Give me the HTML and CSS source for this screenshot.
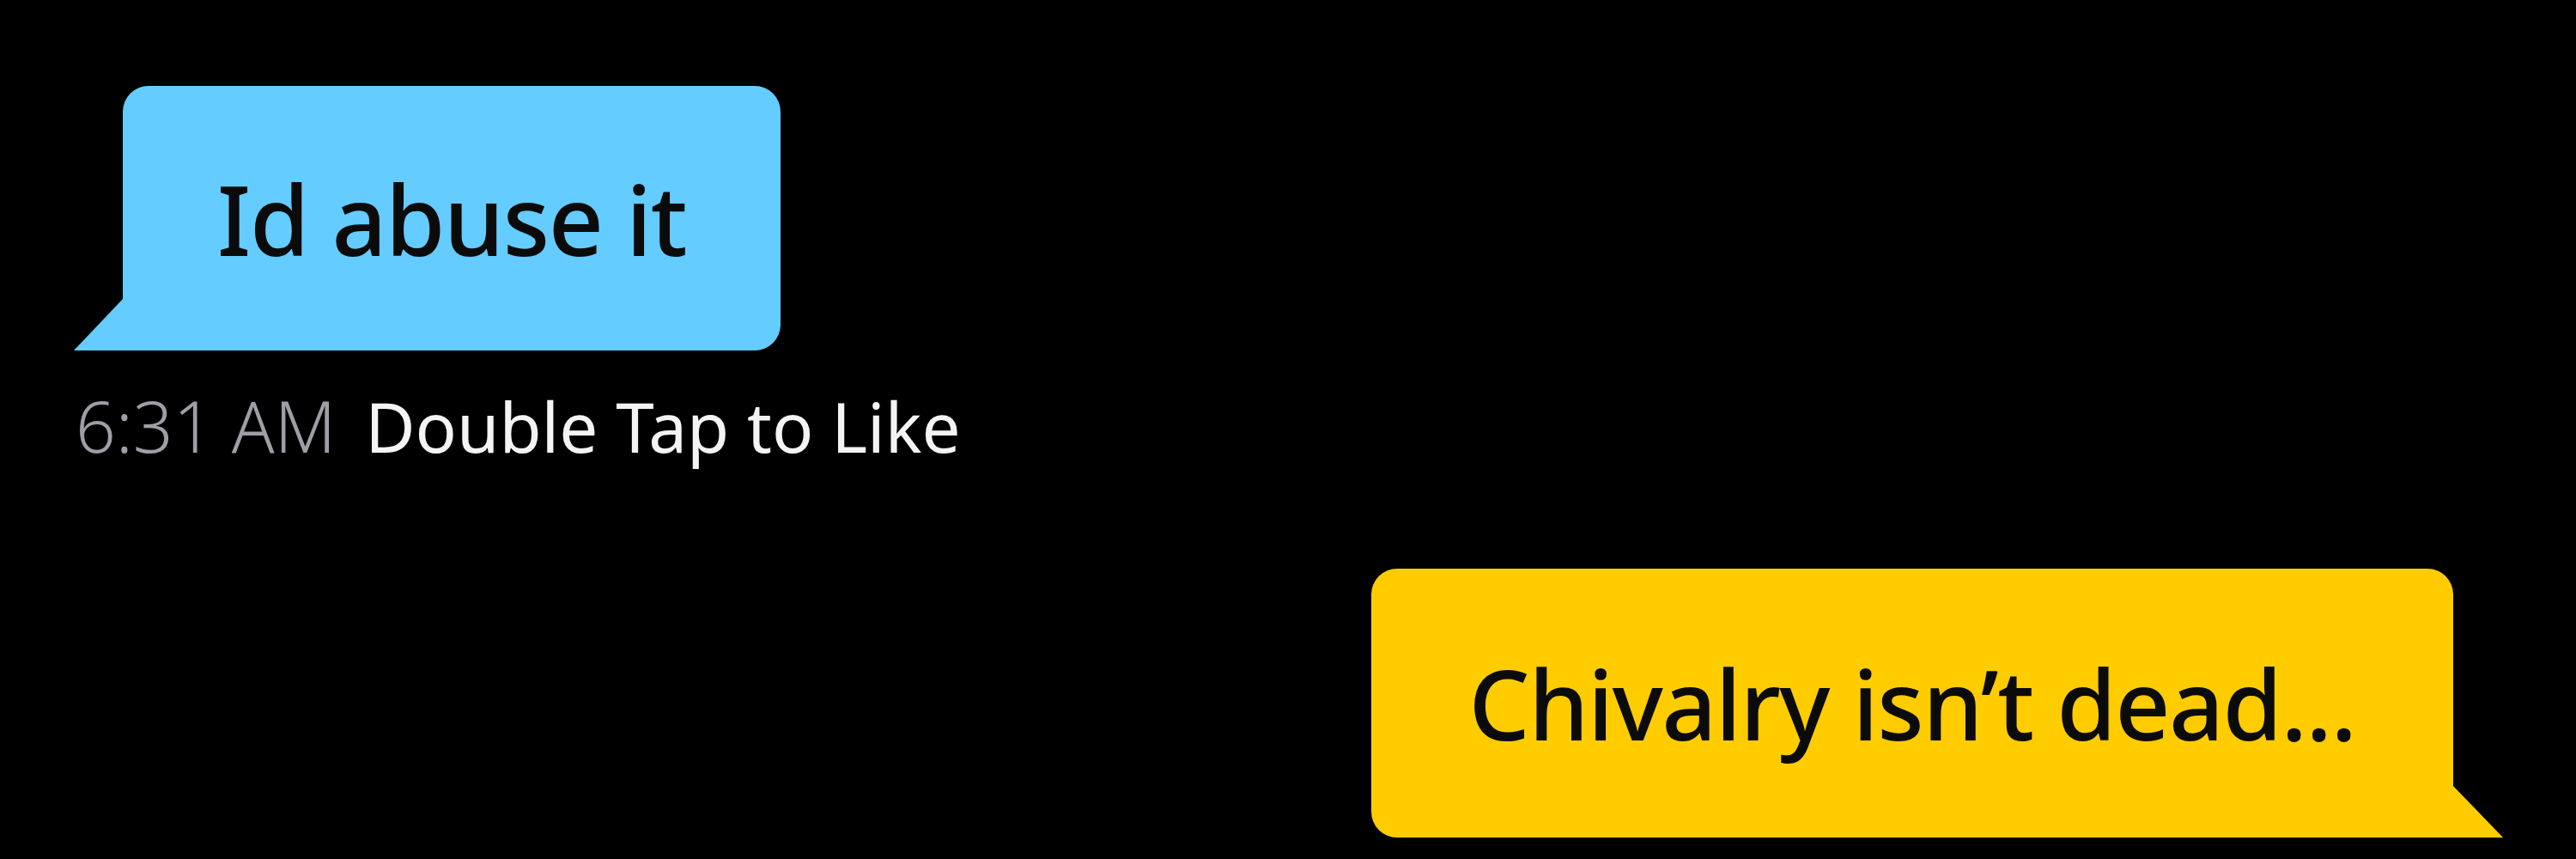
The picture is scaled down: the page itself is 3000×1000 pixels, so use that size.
FILE: index.html
```html
<!DOCTYPE html>
<html lang="en">
<head>
  <meta charset="UTF-8" />
  <title>Chat</title>
  <link rel="stylesheet" href="styles.css">
</head>
<body>

  <div class="thread">

    <!-- 受信メッセージ -->
    <div class="msg msg_in">
      <div class="tail"></div>
      <div class="bubble">Id abuse it</div>
    </div>

    <p class="meta">
      <span class="time">6:31 AM</span>
      <span class="like">Double Tap to Like</span>
    </p>

    <!-- 送信メッセージ -->
    <div class="msg msg_out">
      <div class="bubble">Chivalry isn’t dead...</div>
      <div class="tail"></div>
    </div>

  </div>

</body>
</html>
```

FILE: styles.css
```css
body {
  margin: 0;
  padding: 0;
  background: #000;
}

.thread {
  width: 3000px;
  height: 1000px;
  box-sizing: border-box;
  padding: 100px 85px 0 86px;

  display: flex;
  flex-direction: column;

  font-family: "Noto Sans", "Open Sans", sans-serif;
  color: #0b0b0b;
}

/* ========================== */
/* 吹き出し */
/* ========================== */

.msg {
  display: flex;
  align-items: flex-end;
}

.bubble {
  height: 308px;
  display: flex;
  justify-content: center;
  align-items: center;

  font-size: 112px;
  font-weight: 500;
  letter-spacing: -1.5px;
}

.tail {
  width: 58px;
  height: 60px;
}

.msg_in .bubble {
  width: 766px;
  background: #64ccfe;
  border-radius: 30px 30px 30px 0;
}

.msg_in .tail {
  width: 57px;
  background: #64ccfe;
  clip-path: polygon(100% 0, 100% 100%, 0 100%);
}

.msg_out {
  align-self: flex-end;
  margin-top: 111px;
}

.msg_out .bubble {
  width: 1260px;
  height: 313px;
  background: #ffcc00;
  border-radius: 30px 30px 0 30px;
}

.msg_out .tail {
  background: #ffcc00;
  clip-path: polygon(0 0, 100% 100%, 0 100%);
}

/* ========================== */
/* 時刻 */
/* ========================== */

.meta {
  margin: 32px 0 0 2px;
  display: flex;
  align-items: baseline;
  gap: 34px;
  line-height: 110px;
}

.time {
  font-size: 82px;
  color: #9e9ea6;
  font-weight: 300;
}

.like {
  font-size: 80px;
  color: #f4f4f4;
}
```
